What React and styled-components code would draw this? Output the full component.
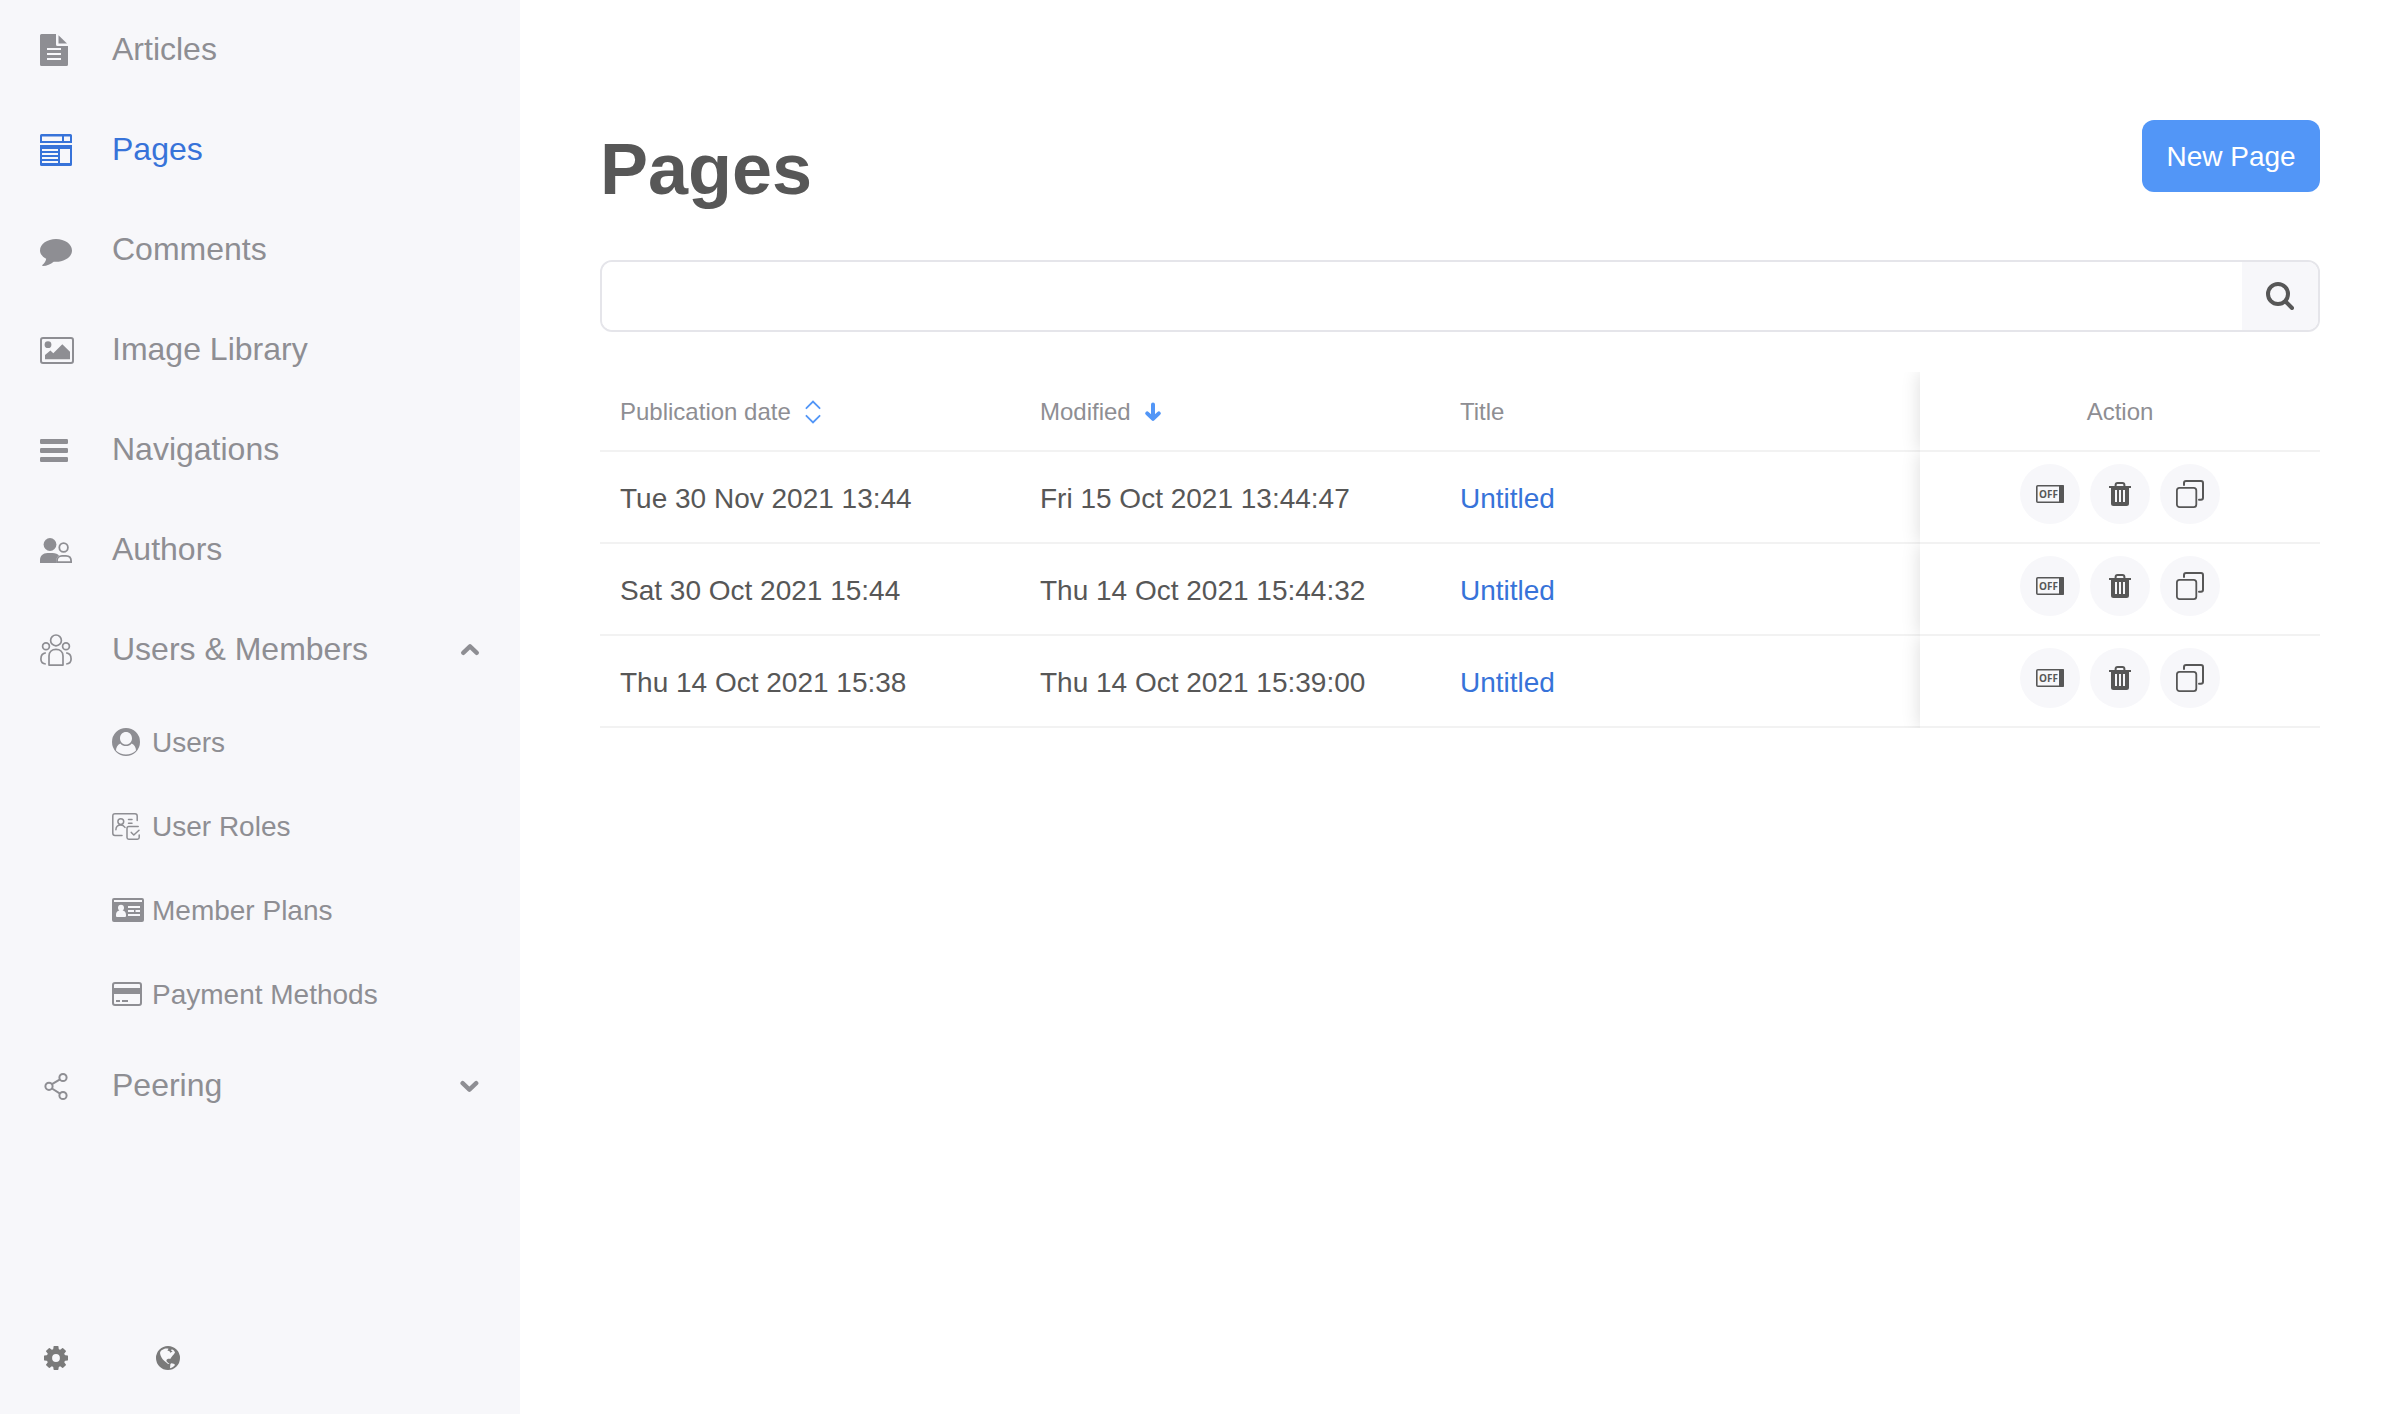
import React from 'react';
import styled, { createGlobalStyle, css } from 'styled-components';

const color = {
  primary: '#5296f7',
  link: '#3773d9',
  text: '#575757',
  muted: '#8e8e93',
  panel: '#f7f7fa',
  border: '#e5e5ea',
  rule: '#f2f2f2',
};

const GlobalStyle = createGlobalStyle`
  * { box-sizing: border-box; }
  body {
    margin: 0;
    background: #fff;
    color: ${color.text};
    font-family: "Liberation Sans", Arial, sans-serif;
    font-size: 28px;
    line-height: 40px;
  }
  button, input { font: inherit; color: inherit; }
  svg { display: block; flex: none; }
`;

const Layout = styled.div`
  display: flex;
  min-height: 100vh;
`;

const Sidebar = styled.aside`
  display: flex;
  flex-direction: column;
  flex: 0 0 520px;
  background: ${color.panel};
`;

const NavList = styled.ul`
  list-style: none;
  margin: 0;
  padding: 0;
`;

const navRow = css`
  display: flex;
  align-items: center;
  width: 100%;
  border: 0;
  background: none;
  text-align: left;
  text-decoration: none;
  cursor: pointer;
  color: ${(p) => (p.$active ? color.link : color.muted)};
`;

const navItem = css`
  ${navRow}
  height: 100px;
  padding: 0 40px;
  font-size: 32px;
`;

const NavLink = styled.a`${navItem}`;
const NavToggle = styled.button`${navItem}`;

const SubLink = styled.a`
  ${navRow}
  height: 84px;
  padding: 0 40px 0 112px;
`;

const IconSlot = styled.span`
  flex: 0 0 ${(p) => (p.$small ? 40 : 72)}px;
`;

const NavLabel = styled.span`
  flex: 1;
  padding-bottom: 2px;
`;

const SubLabel = styled.span`
  flex: 1;
  padding-top: 2px;
`;

const SidebarFooter = styled.div`
  display: flex;
  margin-top: auto;
`;

const FooterButton = styled.button`
  display: grid;
  place-items: center;
  width: 112px;
  height: 112px;
  padding: 0;
  border: 0;
  background: none;
  color: #7a7a7a;
  cursor: pointer;
`;

const Main = styled.main`
  flex: 1;
  min-width: 0;
  padding: 120px 80px;
`;

const Header = styled.header`
  display: flex;
  justify-content: space-between;
  align-items: flex-start;
  min-height: 100px;
  margin-bottom: 40px;
`;

const Heading = styled.h1`
  margin: 0;
  font-size: 72px;
  line-height: 98px;
`;

const PrimaryButton = styled.button`
  min-width: 178px;
  height: 72px;
  padding: 2px 24px 0;
  border: 0;
  border-radius: 12px;
  background: ${color.primary};
  color: #fff;
  cursor: pointer;
`;

const SearchGroup = styled.form`
  display: flex;
  height: 72px;
  margin-bottom: 40px;
  border: 2px solid ${color.border};
  border-radius: 12px;
  overflow: hidden;
`;

const SearchInput = styled.input`
  flex: 1;
  min-width: 0;
  padding: 0 22px;
  border: 0;
  outline: 0;
  background: #fff;
`;

const SearchButton = styled.button`
  display: grid;
  place-items: center;
  width: 76px;
  padding: 0;
  border: 0;
  background: ${color.panel};
  cursor: pointer;
`;

const Table = styled.table`
  width: 100%;
  table-layout: fixed;
  border-collapse: separate;
  border-spacing: 0;
`;

const Col = styled.col`
  width: ${(p) => p.$width};
`;

const pinned = css`
  background: #fff;
  box-shadow: 0 0 18px rgba(9, 9, 9, 0.14);
  clip-path: inset(0 0 0 -20px);
`;

const HeadCell = styled.th`
  height: 80px;
  padding: 2px 20px 0;
  border-bottom: 2px solid ${color.rule};
  color: ${color.muted};
  font-size: 24px;
  font-weight: 400;
  text-align: ${(p) => (p.$pinned ? 'center' : 'left')};
  ${(p) => p.$pinned && pinned}
`;

const SortButton = styled.button`
  display: flex;
  align-items: center;
  gap: 10px;
  padding: 0;
  border: 0;
  background: none;
  cursor: pointer;

  svg { color: ${color.primary}; }
`;

const Cell = styled.td`
  height: 92px;
  padding: 4px 20px 0;
  border-bottom: 2px solid ${color.rule};
`;

const ActionCell = styled.td`
  height: 92px;
  padding: 12px 20px;
  border-bottom: 2px solid ${color.rule};
  vertical-align: top;
  ${pinned}
`;

const Actions = styled.div`
  display: flex;
  justify-content: center;
  gap: 10px;
`;

const RoundButton = styled.button`
  display: grid;
  place-items: center;
  width: 60px;
  height: 60px;
  padding: 0;
  border: 0;
  border-radius: 50%;
  background: ${color.panel};
  cursor: pointer;
`;

const TitleLink = styled.a`
  color: ${color.link};
  text-decoration: none;
`;

function Svg({ w, h, children }) {
  return (
    <svg width={w} height={h} viewBox={`0 0 ${w} ${h}`} fill="currentColor" aria-hidden="true">
      {children}
    </svg>
  );
}

const line = (width) => ({ fill: 'none', stroke: 'currentColor', strokeWidth: width });

const ArticleIcon = () => (
  <Svg w={28} h={32}>
    <path
      fillRule="evenodd"
      d="M1.5 0H16V10.5Q16 12 17.5 12H28V30.5Q28 32 26.5 32H1.5Q0 32 0 30.5V1.5Q0 0 1.5 0ZM7 14V16H21V14ZM7 19V21H21V19ZM7 24V26H21V24Z"
    />
    <path d="M18.5 1.2L27 9.6H18.5Z" />
  </Svg>
);

const PagesIcon = () => (
  <Svg w={32} h={32}>
    <path
      fillRule="evenodd"
      d="M1.5 0H30.5Q32 0 32 1.5V9H0V1.5Q0 0 1.5 0ZM2 2.5V7H22V2.5ZM24 2.5V7H30V2.5Z"
    />
    <path
      fillRule="evenodd"
      d="M0 11H32V30.5Q32 32 30.5 32H1.5Q0 32 0 30.5ZM2 15V17H18V15ZM2 19V21H18V19ZM2 23V25H18V23ZM2 27V29H18V27ZM20 15V29H30V15Z"
    />
  </Svg>
);

const CommentIcon = () => (
  <Svg w={32} h={32}>
    <path d="M16 5C24.8 5 32 10 32 16.4S24.8 27.8 16 27.8C15.2 27.8 14.4 27.8 13.7 27.7C10.6 30.2 6.8 32 3 32C2.2 32 2 31.4 2.6 30.8C4.6 29 5.8 27.2 6.2 24.8C2.4 22.8 0 19.8 0 16.4C0 10 7.2 5 16 5Z" />
  </Svg>
);

const ImageIcon = () => (
  <Svg w={34} h={32}>
    <rect x="1" y="4" width="32" height="25" rx="2" {...line(2)} />
    <circle cx="8" cy="10.7" r="3.4" />
    <path d="M5 25.3V21L10.4 16.6L13.3 19.2L22.3 10.2L30 17.7V25.3Z" />
  </Svg>
);

const MenuIcon = () => (
  <Svg w={28} h={32}>
    <rect y="5" width="28" height="5" rx="1.2" />
    <rect y="14" width="28" height="5" rx="1.2" />
    <rect y="23" width="28" height="5" rx="1.2" />
  </Svg>
);

const AuthorsIcon = () => (
  <Svg w={32} h={32}>
    <circle cx="10" cy="10.5" r="6.4" />
    <path d="M0 29V26.5C0 21.8 3 19 7.5 19H12.5C15.6 19 17.8 20 19 21.4C17 22.6 16 25 16 29Z" />
    <ellipse cx="23.6" cy="13.5" rx="4.3" ry="4.4" {...line(1.8)} />
    <path d="M17 28.1V27C17 24 19 21.9 22 21.9H26C29.2 21.9 31.1 24 31.1 27V28.1Z" {...line(1.8)} />
  </Svg>
);

const MembersIcon = () => (
  <Svg w={32} h={32}>
    <g {...line(1.7)} strokeLinejoin="round">
      <circle cx="16" cy="6.4" r="5.4" />
      <circle cx="6" cy="12.3" r="3.4" />
      <circle cx="26" cy="12.3" r="3.4" />
      <path d="M9 31V22C9 18 12 15.4 16 15.4S23 18 23 22V31Q23 31.2 22.4 31.2H9.6Q9 31.2 9 31Z" />
      <path d="M5.8 18.9C2.8 19.2 0.9 21.4 0.9 25C0.9 28.2 2.6 29.8 5.8 30" />
      <path d="M26.2 18.9C29.2 19.2 31.1 21.4 31.1 25C31.1 28.2 29.4 29.8 26.2 30" />
    </g>
  </Svg>
);

const UserIcon = () => (
  <Svg w={28} h={28}>
    <path
      fillRule="evenodd"
      d="M14 0A14 14 0 0 1 14 28A14 14 0 0 1 14 0ZM14 4C10.6 4 8 6.6 8 10.3C8 13.8 10.6 16.6 14 16.6S20 13.8 20 10.3C20 6.6 17.4 4 14 4ZM8.3 15.4C5.4 16.8 4 19.4 4 22.6C6.6 25.2 10.2 26.5 14 26.5S21.4 25.2 24 22.6C24 19.4 22.6 16.8 19.7 15.4C18.2 17.2 16.2 18 14 18S9.8 17.2 8.3 15.4Z"
    />
  </Svg>
);

const RolesIcon = () => (
  <Svg w={28} h={28}>
    <g {...line(1.5)} strokeLinecap="round" strokeLinejoin="round">
      <path d="M25.2 8.5V4Q25.2 1.7 23 1.7H3Q0.8 1.7 0.8 4V21.3Q0.8 23.5 3 23.5H10" />
      <circle cx="8.8" cy="9.6" r="2.9" />
      <path d="M3.9 17.8C3.9 14.8 5.6 13 8.8 13C11.2 13 12.2 14.2 13 15.4" />
      <path d="M16.5 7.6H20M16.5 11.2H20" />
      <path d="M26.2 14.6H16.8Q15 14.6 15 16.4V25.6Q15 27.2 16.8 27.2H25.4Q27.2 27.2 27.2 25.6V23" />
      <path d="M19.3 20.4L21.8 23L27 18.2" />
    </g>
  </Svg>
);

const PlansIcon = () => (
  <Svg w={32} h={28}>
    <path
      fillRule="evenodd"
      d="M2 2H30Q32 2 32 4V24Q32 26 30 26H2Q0 26 0 24V4Q0 2 2 2ZM2 4V6H30V4ZM9 8.8C7.2 8.8 6 10 6 11.8C6 13.2 6.6 14 7.4 14.6C5 15 4 16.6 4 19V20Q4 21 5 21H13Q14 21 14 20V19C14 16.6 13 15 10.6 14.6C11.4 14 12 13.2 12 11.8C12 10 10.8 8.8 9 8.8ZM16 10V12H28V10ZM16 14V16H22V14ZM23.5 14V16H28V14ZM16 18V20H28V18Z"
    />
  </Svg>
);

const CardIcon = () => (
  <Svg w={30} h={28}>
    <rect x="1" y="3" width="28" height="22" rx="2" {...line(2)} />
    <path d="M1 8H29V14H1ZM4 20H8V22H4ZM10 20H16V22H10Z" />
  </Svg>
);

const ShareIcon = () => (
  <Svg w={32} h={32}>
    <g {...line(2)}>
      <circle cx="23" cy="7.5" r="3.6" />
      <circle cx="9" cy="16.3" r="3.6" />
      <circle cx="23" cy="25.5" r="3.6" />
      <path d="M12 14.2L20 9.4M12 18.5L20 23.6" />
    </g>
  </Svg>
);

const Chevron = ({ up }) => (
  <Svg w={20} h={20}>
    <path
      d={up ? 'M3.2 12.8L10 6.4L16.8 12.8' : 'M2.6 7.2L9.4 13.6L16.2 7.2'}
      {...line(4.4)}
      strokeLinecap="round"
      strokeLinejoin="round"
    />
  </Svg>
);

const GearIcon = () => (
  <Svg w={24} h={24}>
    <circle cx="12" cy="12" r="6.6" {...line(5.4)} />
    {[0, 45, 90, 135, 180, 225, 270, 315].map((angle) => (
      <path key={angle} d="M9 4.5L9.6 0.4Q9.7 0 10.1 0H13.9Q14.3 0 14.4 0.4L15 4.5Z" transform={`rotate(${angle} 12 12)`} />
    ))}
  </Svg>
);

const GlobeIcon = () => (
  <Svg w={24} h={24}>
    <path
      fillRule="evenodd"
      d="M12 0A12 12 0 0 1 12 24A12 12 0 0 1 12 0ZM8 3C6 3.8 4 5.2 4 7C4.4 10.4 6 12.6 8.2 14.8C9.4 16 10.6 16.4 12 18L13.6 18C12.2 17 10.4 16 10.4 14.6C10.4 13 12.8 12.4 14.2 13C15.2 10.6 17.8 8.8 19 6.4C18.4 4.6 17 3.6 15.8 3.2L15 4.6L16.6 5.4L14.2 6.8L13.6 5.2L11.4 4.6L12.6 2.8C11 2.4 9.4 2.4 8 3ZM14.4 18L14 22.2C16.2 21.6 18 20.6 19 19C18.6 17.8 17 17.4 15.4 17.2Z"
    />
  </Svg>
);

const SearchIcon = () => (
  <Svg w={28} h={28}>
    <circle cx="12" cy="12" r="10" {...line(4)} />
    <path d="M19.5 19.5L26 26" {...line(4)} strokeLinecap="round" />
  </Svg>
);

const SortIcon = () => (
  <Svg w={24} h={24}>
    <path d="M5.4 8.2L12 1.6L18.6 8.2M5.4 15.8L12 22.4L18.6 15.8" {...line(1.8)} strokeLinecap="round" />
  </Svg>
);

const SortDownIcon = () => (
  <Svg w={24} h={24}>
    <path d="M12 4.6V18.6M6.2 13.4L12 18.8L17.8 13.4" {...line(4)} strokeLinecap="round" strokeLinejoin="round" />
  </Svg>
);

const OffText = styled.text`
  font: 700 10px "Open Sans", "Noto Sans", sans-serif;
`;

const OffIcon = () => (
  <Svg w={28} h={28}>
    <rect x="0.8" y="5.8" width="26.4" height="16.4" rx="1" {...line(1.6)} />
    <rect x="23" y="5" width="5" height="18" rx="1" />
    <OffText x="3" y="17.6">OFF</OffText>
  </Svg>
);

const TrashIcon = () => (
  <Svg w={28} h={28}>
    <path d="M9.6 6.5V5Q9.6 3 11.6 3H16.4Q18.4 3 18.4 5V6.5" {...line(2)} />
    <rect x="3" y="6" width="22" height="2" />
    <path
      fillRule="evenodd"
      d="M5 8H23V23.5Q23 26 20.5 26H7.5Q5 26 5 23.5ZM9 10V22H11V10ZM13 10V22H15V10ZM17 10V22H19V10Z"
    />
  </Svg>
);

const CopyIcon = () => (
  <Svg w={28} h={28}>
    <rect x="0.9" y="7.9" width="19.4" height="19.2" rx="2.6" {...line(1.8)} />
    <path d="M8 5V3Q8 1 10 1H25Q27 1 27 3V17.8Q27 19.8 25 19.8H23" {...line(2)} strokeLinecap="round" />
  </Svg>
);

const topItems = [
  { label: 'Articles', Icon: ArticleIcon },
  { label: 'Pages', Icon: PagesIcon, active: true },
  { label: 'Comments', Icon: CommentIcon },
  { label: 'Image Library', Icon: ImageIcon },
  { label: 'Navigations', Icon: MenuIcon },
  { label: 'Authors', Icon: AuthorsIcon },
];

const memberItems = [
  { label: 'Users', Icon: UserIcon },
  { label: 'User Roles', Icon: RolesIcon },
  { label: 'Member Plans', Icon: PlansIcon },
  { label: 'Payment Methods', Icon: CardIcon },
];

const pages = [
  { published: 'Tue 30 Nov 2021 13:44', modified: 'Fri 15 Oct 2021 13:44:47', title: 'Untitled' },
  { published: 'Sat 30 Oct 2021 15:44', modified: 'Thu 14 Oct 2021 15:44:32', title: 'Untitled' },
  { published: 'Thu 14 Oct 2021 15:38', modified: 'Thu 14 Oct 2021 15:39:00', title: 'Untitled' },
];

export default function App() {
  return (
    <>
      <GlobalStyle />
      <Layout>
        <Sidebar>
          <nav>
            <NavList>
              {topItems.map(({ label, Icon, active }) => (
                <li key={label}>
                  <NavLink href="#" $active={active} aria-current={active ? 'page' : undefined}>
                    <IconSlot><Icon /></IconSlot>
                    <NavLabel>{label}</NavLabel>
                  </NavLink>
                </li>
              ))}
              <li>
                <NavToggle type="button" aria-expanded="true">
                  <IconSlot><MembersIcon /></IconSlot>
                  <NavLabel>Users &amp; Members</NavLabel>
                  <Chevron up />
                </NavToggle>
                <NavList>
                  {memberItems.map(({ label, Icon }) => (
                    <li key={label}>
                      <SubLink href="#">
                        <IconSlot $small><Icon /></IconSlot>
                        <SubLabel>{label}</SubLabel>
                      </SubLink>
                    </li>
                  ))}
                </NavList>
              </li>
              <li>
                <NavToggle type="button" aria-expanded="false">
                  <IconSlot><ShareIcon /></IconSlot>
                  <NavLabel>Peering</NavLabel>
                  <Chevron />
                </NavToggle>
              </li>
            </NavList>
          </nav>
          <SidebarFooter>
            <FooterButton type="button" aria-label="Settings"><GearIcon /></FooterButton>
            <FooterButton type="button" aria-label="Language"><GlobeIcon /></FooterButton>
          </SidebarFooter>
        </Sidebar>
        <Main>
          <Header>
            <Heading>Pages</Heading>
            <PrimaryButton type="button">New Page</PrimaryButton>
          </Header>
          <SearchGroup role="search">
            <SearchInput type="text" aria-label="Search pages" />
            <SearchButton type="button" aria-label="Search"><SearchIcon /></SearchButton>
          </SearchGroup>
          <Table>
            <colgroup>
              <Col $width="420px" />
              <Col $width="420px" />
              <Col $width="auto" />
              <Col $width="400px" />
            </colgroup>
            <thead>
              <tr>
                <HeadCell scope="col">
                  <SortButton type="button">Publication date<SortIcon /></SortButton>
                </HeadCell>
                <HeadCell scope="col" aria-sort="descending">
                  <SortButton type="button">Modified<SortDownIcon /></SortButton>
                </HeadCell>
                <HeadCell scope="col">Title</HeadCell>
                <HeadCell scope="col" $pinned>Action</HeadCell>
              </tr>
            </thead>
            <tbody>
              {pages.map((page) => (
                <tr key={page.modified}>
                  <Cell>{page.published}</Cell>
                  <Cell>{page.modified}</Cell>
                  <Cell><TitleLink href="#">{page.title}</TitleLink></Cell>
                  <ActionCell>
                    <Actions>
                      <RoundButton type="button" aria-label="Unpublish"><OffIcon /></RoundButton>
                      <RoundButton type="button" aria-label="Delete"><TrashIcon /></RoundButton>
                      <RoundButton type="button" aria-label="Duplicate"><CopyIcon /></RoundButton>
                    </Actions>
                  </ActionCell>
                </tr>
              ))}
            </tbody>
          </Table>
        </Main>
      </Layout>
    </>
  );
}
